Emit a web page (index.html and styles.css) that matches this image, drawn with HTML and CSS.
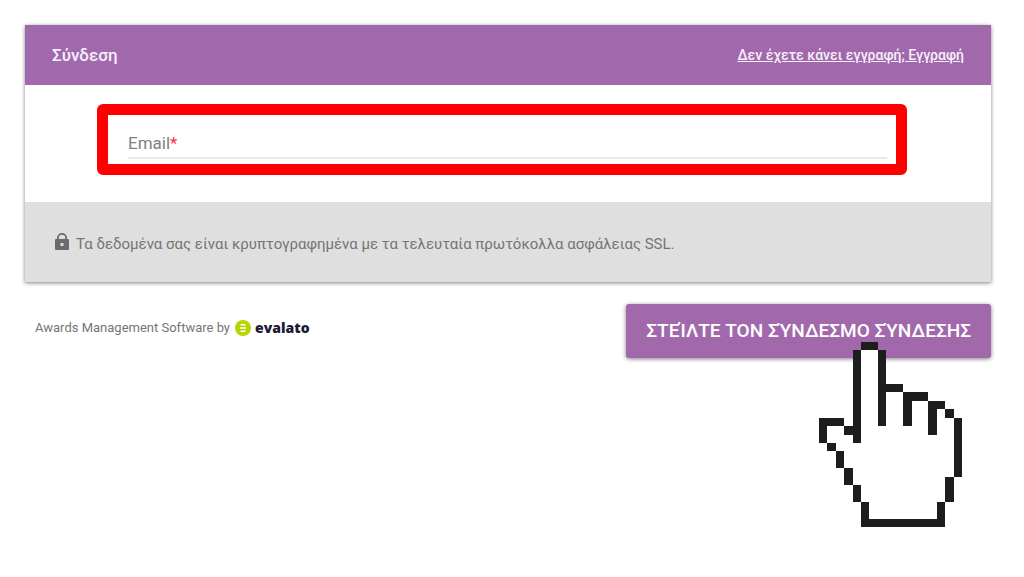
FILE: index.html
```html
<!DOCTYPE html>
<html lang="el">
<head>
<meta charset="utf-8">
<meta name="viewport" content="width=device-width, initial-scale=1">
<title>Σύνδεση</title>
<link rel="stylesheet" href="styles.css">
</head>
<body>
<main class="page">
  <form class="login">
    <section class="card">
      <header class="card-header">
        <h1 class="card-title">Σύνδεση</h1>
        <a class="register-link" href="#">Δεν έχετε κάνει εγγραφή; Εγγραφή</a>
      </header>
      <div class="card-body">
        <div class="highlight">
          <div class="field">
            <label class="field-label" for="email">Email<span class="required">*</span></label>
            <input class="field-input" id="email" type="email" required>
          </div>
        </div>
      </div>
      <footer class="card-footer">
        <svg class="lock" viewBox="0 0 14 17" aria-hidden="true">
          <path fill-rule="evenodd" d="M2 6V5a5 5 0 0 1 10 0v1h1a1 1 0 0 1 1 1v9a1 1 0 0 1-1 1H1a1 1 0 0 1-1-1V7a1 1 0 0 1 1-1zM3.800 6h6.400V5a3.200 3.200 0 0 0-6.400 0zM5.500 10v3h3v-3z"/>
        </svg>
        <p class="card-note">Τα δεδομένα σας είναι κρυπτογραφημένα με τα τελευταία πρωτόκολλα ασφάλειας SSL.</p>
      </footer>
    </section>
    <div class="actions">
      <p class="credit">
        <span>Awards Management Software by</span>
        <a class="brand" href="#">
          <svg class="brand-mark" viewBox="0 0 16 16" aria-hidden="true">
            <circle cx="8" cy="8" r="8" fill="#b4d500"/>
            <path d="M5.500 4.800h5M5 8h6M5.500 11.200h5" stroke="#fff" stroke-width="1.500"/>
          </svg>
          <span>evalato</span>
        </a>
      </p>
      <div class="submit-wrap">
        <button class="submit" type="submit">ΣΤΕΊΛΤΕ ΤΟΝ ΣΎΝΔΕΣΜΟ ΣΎΝΔΕΣΗΣ</button>
        <svg class="pointer" viewBox="0 0 17 22" shape-rendering="crispEdges" aria-hidden="true">
          <path fill="#fff" d="M5 1h2v5h3v1h3v1h2v1h1v7h-1v3h-1v2H6v-2H5v-2H4v-2H3v-2H2v-2H1v-2h2v1h1v1h1z"/>
          <path fill="#1d1d1d" d="M5 0h2v1H5zM4 1h1v11H4zM7 1h1v9H7zM8 5h2v1H8zM10 6h3v1h-2v3h-1zM13 7h2v1h-1v3h-1zM15 8h1v1h-1zM16 9h1v7h-1zM15 16h1v3h-1zM14 19h1v3H5v-3h1v2h8zM4 17h1v2H4zM3 15h1v2H3zM2 13h1v2H2zM1 12h1v1H1zM0 9h3v1H1v2H0zM3 10h1v1H3z"/>
        </svg>
      </div>
    </div>
  </form>
</main>
</body>
</html>
```
FILE: styles.css
```css
* {
  box-sizing: border-box;
}

body {
  margin: 0;
  background: #fff;
  color: #757575;
  font-family: Roboto, "Noto Sans", sans-serif;
}

h1,
p {
  margin: 0;
}

.page {
  min-height: 100vh;
  padding: 25px 33px 48px 25px;
}

.card {
  box-shadow: 0 1px 4px rgba(0, 0, 0, 0.5);
}

.card-header {
  display: flex;
  align-items: center;
  justify-content: space-between;
  gap: 24px;
  padding: 18px 27px;
  background: #a169ac;
  color: #f7effa;
}

.card-title {
  font-size: 17px;
  font-weight: 500;
  line-height: 24px;
}

.register-link {
  color: inherit;
  font-size: 14px;
  font-weight: 500;
  line-height: 24px;
}

.card-body {
  padding: 19px 84px 27px 72px;
  background: #fff;
}

.highlight {
  padding: 12px 9px 5px 20px;
  border: 11px solid #f00;
  border-radius: 6px;
}

.field {
  display: flex;
  align-items: center;
  padding: 4px 0 2px;
  border-bottom: 2px solid #e9e9e9;
}

.field-label {
  font-size: 17px;
  line-height: 24px;
  color: #808080;
}

.required {
  color: #f33;
}

.field-input {
  flex: 1;
  min-width: 0;
  height: 24px;
  padding: 0 4px;
  border: 0;
  outline: 0;
  background: transparent;
  font: inherit;
}

.card-footer {
  display: flex;
  align-items: center;
  gap: 7px;
  padding: 30px 30px 26px;
  background: #dfdfdf;
}

.lock {
  flex: none;
  width: 14px;
  height: 17px;
  margin-bottom: 5px;
  fill: #6b6b6b;
}

.card-note {
  font-size: 15px;
  line-height: 24px;
}

.actions {
  display: flex;
  align-items: flex-start;
  justify-content: space-between;
  gap: 24px;
  padding: 22px 0 0 10px;
}

.credit {
  display: flex;
  align-items: center;
  gap: 5px;
  padding-top: 12px;
  font-size: 13px;
  line-height: 24px;
}

.brand {
  display: flex;
  align-items: center;
  gap: 4px;
  color: #1d1a36;
  font-family: "Open Sans", sans-serif;
  font-size: 14px;
  font-weight: 800;
  text-decoration: none;
}

.brand-mark {
  width: 16px;
  height: 16px;
}

.submit-wrap {
  position: relative;
}

.submit {
  padding: 15px 20px;
  border: 0;
  border-radius: 3px;
  background: #a169ac;
  box-shadow: 0 1px 4px rgba(0, 0, 0, 0.5);
  color: #fff;
  font: 500 19px/24px Roboto, "Noto Sans", sans-serif;
}

.pointer {
  position: absolute;
  top: 38px;
  right: 29px;
  width: 143px;
  height: 185px;
  pointer-events: none;
}
```
